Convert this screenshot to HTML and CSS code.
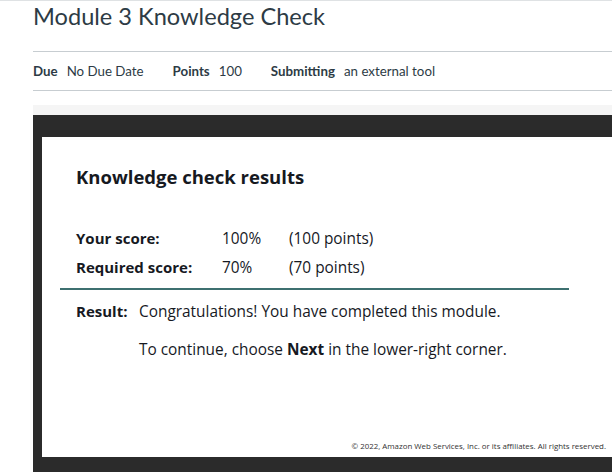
FILE: index.html
```html
<!DOCTYPE html>
<html>
<head>
<meta charset="utf-8">
<link rel="stylesheet" href="styles.css">
</head>
<body>
<div class="page">
  <h1 class="title">Module 3 Knowledge Check</h1>
  <div class="details">
    <span class="label">Due</span><span class="value">No Due Date</span>
    <span class="label">Points</span><span class="value">100</span>
    <span class="label">Submitting</span><span class="value">an external tool</span>
  </div>
  <div class="tool-area">
    <div class="frame">
      <div class="content">
        <h2 class="heading">Knowledge check results</h2>
        <div class="scores">
          <span class="s-label">Your score:</span><span>100%</span><span>(100 points)</span>
          <span class="s-label">Required score:</span><span>70%</span><span>(70 points)</span>
        </div>
        <div class="rule"></div>
        <div class="result">
          <span class="s-label">Result:</span>
          <div class="result-text">
            <p>Congratulations! You have completed this module.</p>
            <p>To continue, choose <b>Next</b> in the lower-right corner.</p>
          </div>
        </div>
        <div class="copyright">© 2022, Amazon Web Services, Inc. or its affiliates. All rights reserved.</div>
      </div>
    </div>
  </div>
</div>
</body>
</html>
```
FILE: styles.css
```css
html, body {
  margin: 0;
  padding: 0;
  overflow: hidden;
  background: #fff;
}
body {
  border-top: 1px solid #dfe2e4;
  height: 472px;
}
.page {
  padding-left: 33px;
}
.title {
  margin: 0;
  height: 50px;
  font-family: Lato, sans-serif;
  font-weight: 400;
  font-size: 23.6px;
  line-height: 30px;
  color: #2d3b45;
}
.details {
  display: flex;
  align-items: center;
  height: 38px;
  border-top: 1px solid #c7cdd1;
  border-bottom: 1px solid #c7cdd1;
  font-family: Lato, sans-serif;
  font-size: 13.3px;
  color: #2d3b45;
}
.details .label {
  font-weight: bold;
  margin-right: 9px;
}
.details .value {
  margin-right: 29px;
}
.tool-area {
  margin-top: 14px;
  padding-top: 10px;
  background: #f5f5f5;
}
.frame {
  background: #2b2b2b;
  padding: 22px 0 15px 9px;
}
.content {
  background: #fff;
  height: 320px;
  padding-left: 18px;
  font-family: "Open Sans", sans-serif;
  color: #16191f;
  display: flex;
  flex-direction: column;
}
.heading {
  margin: 28px 0 0 16px;
  font-size: 18.5px;
  font-weight: bold;
  line-height: 24px;
}
.scores {
  margin: 38px 0 0 16px;
  display: grid;
  grid-template-columns: 146px 67px auto;
  row-gap: 6px;
  font-size: 15.4px;
  line-height: 23px;
}
.s-label {
  font-weight: bold;
  font-size: 15px;
}
.rule {
  width: 509px;
  height: 2px;
  background: #3d7070;
  margin-top: 9px;
}
.result {
  display: flex;
  margin: 10px 0 0 16px;
  font-size: 15.4px;
  line-height: 23px;
}
.result .s-label {
  width: 63px;
}
.result-text p {
  margin: 0 0 15px 0;
}
.copyright {
  margin-top: auto;
  margin-bottom: 6px;
  text-align: right;
  padding-right: 6px;
  font-size: 7.9px;
  color: #333;
}
```
